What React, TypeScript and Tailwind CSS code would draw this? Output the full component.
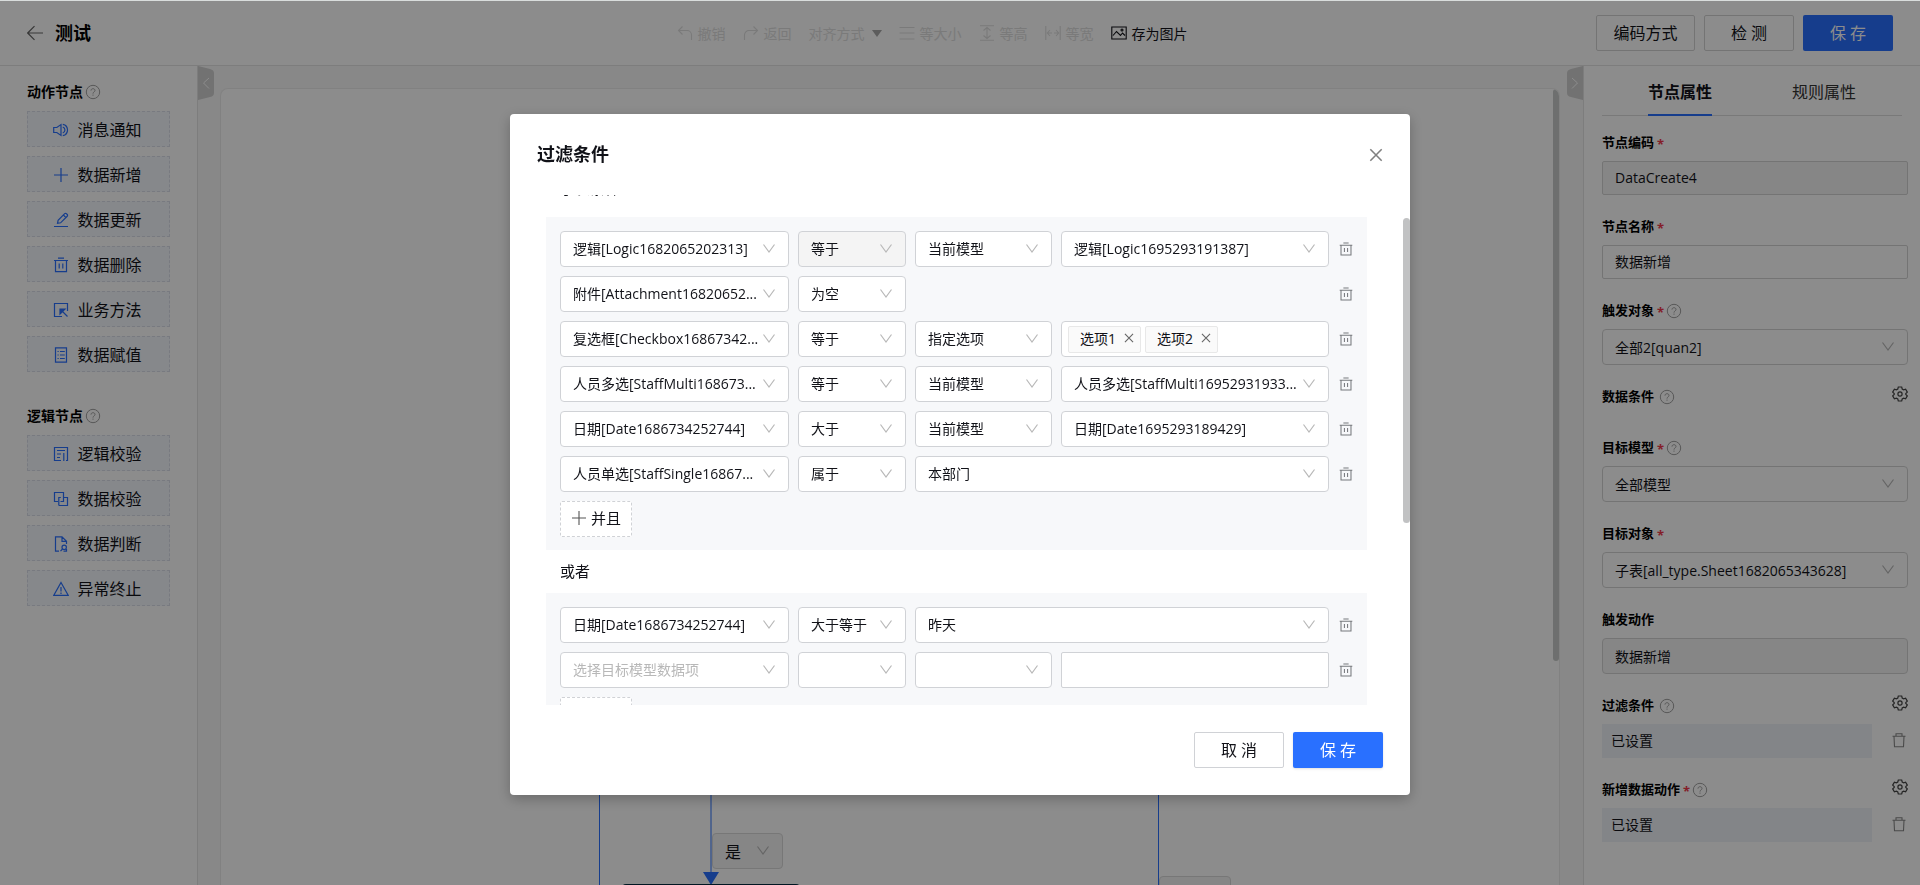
import {useState} from "react";
import type {ReactNode} from "react";
import clsx from "clsx";

const Icon = ({ children, size = 16, className, width = 1.1 }: { children: ReactNode; size?: number; className?: string; width?: number }) => (
    <svg
        width={size}
        height={size}
        viewBox="0 0 16 16"
        fill="none"
        stroke="currentColor"
        strokeWidth={width}
        className={clsx("shrink-0", className)}
        aria-hidden="true"
    >
        {children}
    </svg>
);

const HelpIcon = () => (
    <Icon size={16} className="text-[#a0a0a0]" width={1}>
        <circle cx="8" cy="8" r="6.7"/>
        <path d="M6 6.6c0-1.2.9-1.9 2-1.9s2 .7 2 1.8c0 1.3-2 1.5-2 3.1"/>
        <path d="M8 10.6v1.1"/>
    </Icon>
);

const TrashIcon = () => (
    <Icon size={14} width={1.2}>
        <path d="M.8 3.6h14.4M5 1.2h6M2.3 3.6v11.2h11.4V3.6M6.2 6.8v4.6M9.8 6.8v4.6"/>
    </Icon>
);

const BinIcon = () => (
    <Icon width={1.1}>
        <path d="M1.5 4.3h13M5 4.3V1.700h6v2.600M3 4.300l.5 10.500h9L13 4.300"/>
    </Icon>
);

const GearIcon = () => (
    <Icon width={1.2}>
        <path d="M6.3 1h3.4l.5 2 1.4.8 2-.6 1.7 2.9L13.800 7.500v1l1.500 1.400-1.700 2.900-2-.6-1.400.8-.5 2H6.300l-.5-2-1.400-.8-2 .6L.7 9.900l1.500-1.400v-1L.7 6.100l1.700-2.900 2 .6L5.800 3z"/>
        <circle cx="8" cy="8" r="2.1"/>
    </Icon>
);

const Chevron = ({ className }: { className?: string }) => (
    <svg
        width="12"
        height="10"
        viewBox="0 0 12 10"
        fill="none"
        stroke="currentColor"
        className={clsx("absolute top-1/2 -translate-y-1/2 pointer-events-none text-[#b8b8b8]", className)}
        aria-hidden="true"
    >
        <path d="M.5 .5 6 8 11.500 .5" strokeWidth="1.2"/>
    </svg>
);

const actionNodes = [
    {
        label: "消息通知",
        icon: <path d="M.7 5.500h3.100L8 2.600v10.800l-4.200-2.900H.7zM9.800 2.300a5.800 5.800 0 0 1 0 11.400M9.800 5.200a2.900 2.900 0 0 1 0 5.600M12.500 3.500a6 6 0 0 1 0 9"/>
    },
    { label: "数据新增", icon: <path d="M8 1v14M1 8h14"/> },
    { label: "数据更新", icon: <path d="M1 14.500h14M4.500 11.300l.6-3 6.600-6.600a1.200 1.200 0 0 1 1.700 0l.8.8a1.200 1.200 0 0 1 0 1.700l-6.600 6.600zM10.500 3.200l2.300 2.300"/> },
    { label: "数据删除", icon: <path d="M1 3.500h14M5 1.200h6M2.500 3.500v11.200h11V3.500M6.200 6.500v5M9.800 6.500v5"/> },
    { label: "业务方法", icon: <><path d="M9 14.500H1.500v-13h13V9M14.500 14.500 8 8"/><path d="M7 7h5L7 12z" fill="currentColor"/></> },
    { label: "数据赋值", icon: <path d="M2.500.8h11v14.400h-11zM4.500 4.500h1.200M7 4.500h4.800M4.500 8h1.200M7 8h4.800M4.500 11.500h1.200M7 11.500h4.800"/> },
];

const logicNodes = [
    { label: "逻辑校验", icon: <path d="M8 14.500H1.500v-13h13v13H13M4 4.500h8M4 8h4M4 11.500h3M10.800 7v8"/> },
    { label: "数据校验", icon: <path d="M5 10.500H1.500v-9h9v4M10.500 5.500V10.500H7.500M5.800 14.500V6.500h2M5.800 14.500h8.700V6.500h-4"/> },
    { label: "数据判断", icon: <><path d="M6 15.200H2.500V.8h6.500l4.500 4.500V8M9 .8v4.500h4.500M9.500 13l-2 2.200"/><circle cx="11.200" cy="11.300" r="2.200"/><path d="M13.500 13v2.200h-3"/></> },
    { label: "异常终止", icon: <path d="M8 1.500 15.300 14.400H.7zM8 6v4.500M8 11.500V13"/> },
];

const toolbar = [
    { label: "撤销", icon: <path d="M5.500 1.500 1.500 5.500l4 4M1.500 5.500H10a4.500 4.500 0 0 1 4.500 4.500v5"/> },
    { label: "返回", icon: <path d="M10.500 1.500l4 4-4 4M14.500 5.500H6A4.500 4.500 0 0 0 1.500 10v5"/> },
    { label: "对齐方式" },
    { label: "等大小", icon: <path d="M.5 2.500h15M.5 8h15M.5 14h15"/> },
    { label: "等高", icon: <path d="M1 .8h14M1 15.200h14M8 2.500v11M4.500 5.500 8 2.500l3.500 3M4.500 10.500l3.500 3 3.500-3"/> },
    { label: "等宽", icon: <path d="M.8 1v14M15.200 1v14M2.500 8h4.500M9 8h4.500M5 5 2.300 8 5 11M11 5l2.700 3L11 11"/> },
];

type Condition = {
    field?: string;
    op?: string;
    opDisabled?: boolean;
    source?: string;
    value?: string;
    kind: "select" | "none" | "tags" | "wide" | "input";
};

const groups: Condition[][] = [
    [
        { field: "逻辑[Logic1682065202313]", op: "等于", opDisabled: true, source: "当前模型", value: "逻辑[Logic1695293191387]", kind: "select" },
        { field: "附件[Attachment16820652...", op: "为空", kind: "none" },
        { field: "复选框[Checkbox16867342...", op: "等于", source: "指定选项", kind: "tags" },
        { field: "人员多选[StaffMulti168673...", op: "等于", source: "当前模型", value: "人员多选[StaffMulti16952931933...", kind: "select" },
        { field: "日期[Date1686734252744]", op: "大于", source: "当前模型", value: "日期[Date1695293189429]", kind: "select" },
        { field: "人员单选[StaffSingle16867...", op: "属于", value: "本部门", kind: "wide" },
    ],
    [
        { field: "日期[Date1686734252744]", op: "大于等于", value: "昨天", kind: "wide" },
        { kind: "input" },
    ],
];

const ConditionSelect = ({ value, label, className, disabled, placeholder }: {
    value?: string;
    label: string;
    className: string;
    disabled?: boolean;
    placeholder?: string;
}) => (
    <div className={clsx("relative", className)}>
        <select
            aria-label={label}
            disabled={disabled}
            className={clsx(
                "block w-full h-9 appearance-none rounded border border-[#d0d2d6] pl-3 pr-2 pb-0.5 text-[14px] opacity-100",
                disabled ? "bg-[#f4f4f4]" : "bg-white",
                value ? "text-[#111218]" : "text-[#b8b8b8]"
            )}
        >
            <option>{value ?? placeholder ?? ""}</option>
        </select>
        <Chevron className="right-[14px]"/>
    </div>
);

const ConditionRow = ({ row }: { row: Condition }) => {
    const [tags, setTags] = useState(["选项1", "选项2"]);

    return (
        <div className="flex items-center gap-[9px]">
            <ConditionSelect label="数据项" value={row.field} placeholder="选择目标模型数据项" className="w-[229px]"/>
            <ConditionSelect label="操作符" value={row.op} disabled={row.opDisabled} className="w-[108px]"/>
            {row.kind !== "none" && row.kind !== "wide" && (
                <ConditionSelect label="取值方式" value={row.source} className="w-[137px]"/>
            )}
            {(row.kind === "select" || row.kind === "wide") && (
                <ConditionSelect label="值" value={row.value} className="flex-1"/>
            )}
            {row.kind === "tags" && (
                <div className="flex flex-1 items-center h-9 gap-1 rounded border border-[#d0d2d6] bg-white px-1.5">
                    {tags.map((tag) => (
                        <span key={tag} className="flex items-center h-[27px] gap-2 rounded-xs border border-[#e8e8e8] bg-[#fafafa] pl-[11px] pr-1.5 pb-0.5 text-[14px]">
                            {tag}
                            <button aria-label={`移除${tag}`} className="cursor-pointer text-[#666]" onClick={() => setTags(tags.filter((t) => t !== tag))}>
                                <Icon size={10} width={1.8}><path d="M1.500 1.500l13 13M14.500 1.500l-13 13"/></Icon>
                            </button>
                        </span>
                    ))}
                </div>
            )}
            {row.kind === "input" && (
                <input aria-label="值" className="flex-1 min-w-0 h-9 rounded-xs border border-[#d0d2d6] bg-white px-3 text-[14px]"/>
            )}
            <button aria-label="删除条件" className="ml-auto pl-px text-[#77797d] cursor-pointer"><TrashIcon/></button>
        </div>
    );
};

const ConditionGroup = ({ rows }: { rows: Condition[] }) => (
    <div className="flex flex-col gap-[9px] bg-[#f7f8fa] px-[14px] pt-[14px] pb-[13px]">
        {rows.map((row, i) => <ConditionRow key={i} row={row}/>)}
        <button className="flex items-center justify-center gap-1 w-[72px] h-9 rounded-xs border border-dashed border-[#d0d2d6] bg-white pb-0.5 text-[15px] cursor-pointer">
            <Icon className="text-[#555]"><path d="M8 1v14M1 8h14"/></Icon>
            并且
        </button>
    </div>
);

const FilterModal = () => (
    <div className="fixed inset-x-0 top-px bottom-0 z-10 flex items-start justify-center bg-black/45 pt-[113px]">
        <div role="dialog" aria-labelledby="modal-title" className="w-[900px] max-w-full rounded bg-white shadow-[0_4px_14px_rgba(0,0,0,0.25)]">
            <div className="flex items-center justify-between h-[81px] pl-[27px] pr-[27px]">
                <h2 id="modal-title" className="text-[18px] font-bold">过滤条件</h2>
                <button aria-label="关闭" className="text-[#808080] cursor-pointer">
                    <Icon size={14} width={1.8}><path d="M1.500 1.500l13 13M14.500 1.500l-13 13"/></Icon>
                </button>
            </div>
            <div className="flex justify-between h-[510px] overflow-hidden">
                <div className="flex-1 ml-9 mr-9">
                    <h3 className="-mt-[17px] h-[39px] pl-[14px] text-[15px] leading-5">子表条件</h3>
                    <ConditionGroup rows={groups[0]}/>
                    <p className="h-[43px] pl-[14px] text-[15px] leading-[43px]">或者</p>
                    <ConditionGroup rows={groups[1]}/>
                </div>
                <div className="mt-[23px] w-[7px] h-[305px] rounded-full bg-[#c1c2c3]"/>
            </div>
            <div className="flex justify-end gap-[9px] pt-[27px] pr-[27px] pb-[27px] text-[16px]">
                <button className="w-[90px] h-9 rounded-xs border border-[#d0d2d6] bg-white cursor-pointer">取 消</button>
                <button className="w-[90px] h-9 rounded-xs bg-[#2970ff] text-white shadow-sm cursor-pointer">保 存</button>
            </div>
        </div>
    </div>
);

const NodeList = ({ title, nodes }: { title: string; nodes: { label: string; icon: ReactNode }[] }) => (
    <section className="flex flex-col gap-[9px]">
        <h2 className="flex items-center gap-0.5 h-5 text-[14px] leading-5 font-bold text-black">{title}<HelpIcon/></h2>
        {nodes.map((node) => (
            <button key={node.label} className="flex items-center justify-center gap-2 h-9 border border-dashed border-[#dadeea] bg-[#f4f7fd] pt-0.5 pr-0.5 text-[16px] cursor-pointer">
                <Icon className="text-[#2970ff]" width={1.2}>{node.icon}</Icon>
                {node.label}
            </button>
        ))}
    </section>
);

const FieldLabel = ({ id, label, required, help, gear }: { id?: string; label: string; required?: boolean; help?: boolean; gear?: boolean }) => (
    <div className="flex items-center justify-between h-5">
        <label htmlFor={id} className="flex items-center text-[13px] font-bold text-black">
            {label}
            {required ? <span className="ml-[3px] mr-0.5 pt-1 text-[#f0384a]">*</span> : <span className="mr-[5px]"/>}
            {help && <HelpIcon/>}
        </label>
        {gear && <button aria-label="设置" className="mb-1.5 text-[#444] cursor-pointer"><GearIcon/></button>}
    </div>
);

const TextField = ({ id, label, value, disabled }: { id: string; label: string; value: string; disabled?: boolean }) => (
    <div className="flex flex-col gap-2">
        <FieldLabel id={id} label={label} required/>
        <input
            id={id}
            defaultValue={value}
            disabled={disabled}
            className={clsx("w-full h-[34px] rounded-xs border border-[#d4d4d4] px-3 pb-0.5 text-[14px]", disabled && "bg-[#f4f4f4]")}
        />
    </div>
);

const SelectField = ({ id, label, value, required = true, help, disabled }: {
    id: string;
    label: string;
    value: string;
    required?: boolean;
    help?: boolean;
    disabled?: boolean;
}) => (
    <div className="flex flex-col gap-2">
        <FieldLabel id={id} label={label} required={required} help={help}/>
        <div className="relative">
            <select
                id={id}
                disabled={disabled}
                className={clsx("block w-full h-9 appearance-none rounded border border-[#d4d4d4] px-3 text-[14px] opacity-100", disabled && "bg-[#f4f4f4]")}
            >
                <option>{value}</option>
            </select>
            {!disabled && <Chevron className="right-[14px]"/>}
        </div>
    </div>
);

const SettingField = ({ label, required }: { label: string; required?: boolean }) => (
    <div className="flex flex-col gap-2">
        <FieldLabel label={label} required={required} help gear/>
        <div className="flex items-center justify-between pr-px">
            <div className="w-[270px] h-[34px] bg-[#eff2f7] pl-[9px] text-[14px] leading-[34px]">已设置</div>
            <button aria-label="清除" className="pb-0.5 text-[#888] cursor-pointer"><BinIcon/></button>
        </div>
    </div>
);

const Canvas = () => (
    <main className="relative flex-1 min-w-0 bg-[#f7f7f7] pl-[22px] pr-[23px] pt-[22px]">
        <button aria-label="收起左侧" className="absolute left-0 top-0">
            <svg width="16" height="34" viewBox="0 0 16 34" fill="none">
                <path d="M0 0l12 3q4 1 4 4v20q0 3-4 4L0 34z" fill="#d0d0d0"/>
                <path d="M11 12 5.500 17l5.500 5.500" stroke="#fff"/>
            </svg>
        </button>
        <button aria-label="收起右侧" className="absolute right-0 top-0">
            <svg width="16" height="34" viewBox="0 0 16 34" fill="none">
                <path d="M16 0 4 3Q0 4 0 7v20q0 3 4 4l12 3z" fill="#d0d0d0"/>
                <path d="M5 12l5.500 5L5 22.500" stroke="#fff"/>
            </svg>
        </button>
        <div className="relative h-full overflow-hidden rounded-t-lg border border-b-0 border-[#ececec] bg-white">
            <div className="absolute right-0 top-0 w-1.5 h-[572px] rounded-full bg-[#c8cbca]"/>
            {/* flow edges and nodes */}
            <svg className="absolute left-0 top-0" width="1100" height="796" fill="none" stroke="#2970ff">
                <path d="M378.500 600v196M490 600v184M937.500 600v196"/>
                <path d="M482 783h16l-8 13z" fill="#2970ff" stroke="none"/>
            </svg>
            <div className="absolute left-[491px] top-[744px] w-[71px]">
                <select aria-label="分支条件" className="block w-full h-9 appearance-none rounded border border-[#d9d9d9] bg-[#f4f4f4] pl-3 pt-0.5 text-[16px]">
                    <option>是</option>
                </select>
                <Chevron className="right-[14px]"/>
            </div>
            <div className="absolute left-[401px] top-[795px] w-[178px] h-9 rounded-t bg-[#00293f]"/>
            <div className="absolute left-[938px] top-[787px] w-[72px] h-9 rounded border border-[#d9d9d9] bg-[#f4f4f4]"/>
        </div>
    </main>
);

const App = () => {
    const [tab, setTab] = useState("节点属性");

    return (
        <div className="flex flex-col h-screen overflow-hidden border-t border-[#d9dddc] bg-white text-[#111218] font-['Open_Sans','Noto_Sans_CJK_SC',sans-serif]">
            <header className="grid grid-cols-[1fr_auto_1fr] items-center shrink-0 h-[65px] border-b border-[#e4e4e4] pl-[27px] pr-[27px]">
                <div className="flex items-center gap-3">
                    <button aria-label="返回上一页" className="text-[#666] cursor-pointer">
                        <Icon width={1.2}><path d="M.7 8H16M7.500 1.200.7 8l6.800 6.800"/></Icon>
                    </button>
                    <h1 className="text-[18px] font-bold text-black">测试</h1>
                </div>
                <nav className="flex items-center gap-[17px] pr-14 text-[14px] text-[#dedede]">
                    {toolbar.map((item) => (
                        <button key={item.label} disabled className="flex items-center gap-[5px]">
                            {item.icon && <Icon>{item.icon}</Icon>}
                            {item.label}
                            {!item.icon && (
                                <svg width="10" height="7" className="ml-0.5 fill-[#a8a8a8]"><path d="M0 0h10L5 7z"/></svg>
                            )}
                        </button>
                    ))}
                    <button className="flex items-center gap-[5px] text-[#111218] cursor-pointer">
                        <Icon width={1.1}>
                            <path d="M.8 2h14.400v12H.8zM2 10.500l3.500-4 4 4L11.500 8l2.500 2.500"/>
                            <circle cx="11" cy="5" r="1"/>
                        </Icon>
                        存为图片
                    </button>
                </nav>
                <div className="flex justify-end gap-[9px] text-[16px]">
                    <button className="w-[99px] h-9 rounded-xs border border-[#d4d4d4] cursor-pointer">编码方式</button>
                    <button className="w-[90px] h-9 rounded-xs border border-[#d4d4d4] cursor-pointer">检 测</button>
                    <button className="w-[90px] h-9 rounded-xs bg-[#2970ff] text-white cursor-pointer">保 存</button>
                </div>
            </header>
            <div className="flex flex-1 min-h-0">
                <aside className="flex flex-col gap-[34px] shrink-0 w-[198px] border-r border-[#e4e4e4] pl-[27px] pr-[27px] pt-4">
                    <NodeList title="动作节点" nodes={actionNodes}/>
                    <NodeList title="逻辑节点" nodes={logicNodes}/>
                </aside>
                <Canvas/>
                <aside className="shrink-0 w-[337px] border-l border-[#e4e4e4] pl-[18px] pr-3">
                    <div role="tablist" className="flex justify-between h-[50px] mr-1.5 px-[46px] border-b border-[#dcdcdc] text-[16px]">
                        {["节点属性", "规则属性"].map((name) => (
                            <button
                                key={name}
                                role="tab"
                                aria-selected={tab === name}
                                onClick={() => setTab(name)}
                                className={clsx("-mb-px border-b-2 pt-1 cursor-pointer", tab === name ? "border-[#2970ff] font-bold" : "border-transparent text-[#333]")}
                            >
                                {name}
                            </button>
                        ))}
                    </div>
                    <div className="flex flex-col gap-[22px] pt-[17px]">
                        <TextField id="code" label="节点编码" value="DataCreate4" disabled/>
                        <TextField id="name" label="节点名称" value="数据新增"/>
                        <SelectField id="trigger" label="触发对象" value="全部2[quan2]" help/>
                        <div className="h-[29px]"><FieldLabel label="数据条件" help gear/></div>
                        <SelectField id="model" label="目标模型" value="全部模型" help/>
                        <SelectField id="target" label="目标对象" value="子表[all_type.Sheet1682065343628]"/>
                        <SelectField id="action" label="触发动作" value="数据新增" required={false} disabled/>
                        <SettingField label="过滤条件"/>
                        <SettingField label="新增数据动作" required/>
                    </div>
                </aside>
            </div>
            <FilterModal/>
        </div>
    );
};

export default App;
